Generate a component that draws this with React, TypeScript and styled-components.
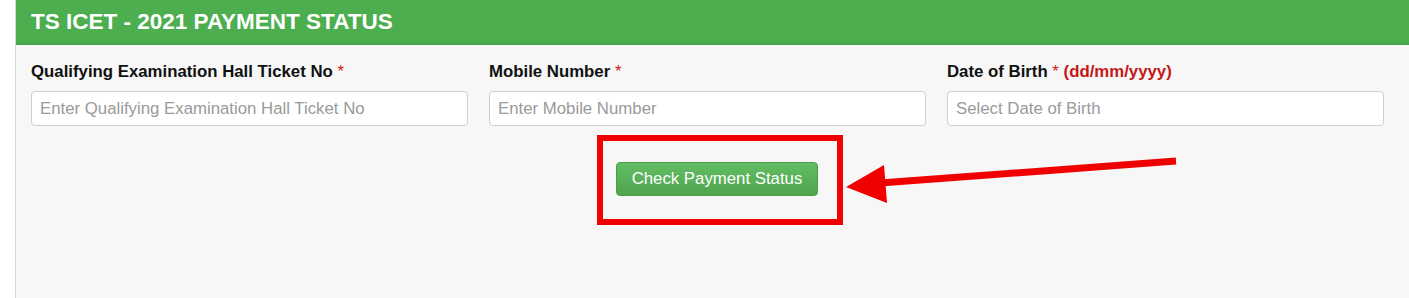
import styled, {createGlobalStyle} from "styled-components";

const GlobalStyle = createGlobalStyle`
    html, body {
        margin: 0;
        padding: 0;
        background: #ffffff;
        font-family: "Liberation Sans", Arial, sans-serif;
        overflow: hidden;
    }
`

const Page = styled.div`
    position: relative;
    width: 1409px;
    height: 298px;
    overflow: hidden;
`

const Panel = styled.section`
    margin-left: 15px;
    width: 1420px;
    min-height: 298px;
    background: #f6f7f6;
    border-left: 1px solid #d9d9d9;
`

const PanelHeader = styled.h2`
    margin: 0;
    height: 43px;
    padding: 0 15px;
    display: flex;
    align-items: center;
    background: #4cae4f;
    border-bottom: 2px solid #47a34a;
    color: #ffffff;
    font-size: 22.5px;
    font-weight: bold;
`

const FieldGrid = styled.div`
    display: grid;
    grid-template-columns: repeat(3, 437px);
    column-gap: 21px;
    padding: 16px 15px 0;
`

const Field = styled.label`
    display: flex;
    flex-direction: column;
`

const LabelText = styled.span`
    font-size: 16.8px;
    font-weight: bold;
    color: #111;
    line-height: 22px;
    margin-bottom: 8px;
`

const Required = styled.span`
    color: #d21a1a;
    font-weight: normal;
`

const Hint = styled.span`
    color: #c41818;
    font-weight: bold;
`

const TextInput = styled.input`
    box-sizing: border-box;
    height: 35px;
    width: 100%;
    padding: 0 8px;
    border: 1px solid #cfcfcf;
    border-radius: 4px;
    background: #fff;
    font-family: "Liberation Sans", Arial, sans-serif;
    font-size: 16.8px;
    color: #333;
    outline: none;

    &::placeholder {
        color: #9a9a9a;
    }
`

const ButtonRow = styled.div`
    display: flex;
    justify-content: center;
    padding-right: 18px;
    margin-top: 36px;
`

const SubmitButton = styled.button`
    width: 202px;
    height: 34px;
    padding: 0;
    border: 1px solid #4a9f4a;
    border-radius: 4px;
    background: linear-gradient(#62be62, #4fa44f);
    color: #fff;
    font-family: "Liberation Sans", Arial, sans-serif;
    font-size: 16.8px;
    cursor: pointer;
`

const Annotation = styled.svg`
    position: absolute;
    top: 0;
    left: 0;
    pointer-events: none;
`

export default function App() {
    return <Page>
        <GlobalStyle/>
        <Panel>
            <PanelHeader>TS ICET - 2021 PAYMENT STATUS</PanelHeader>
            <FieldGrid>
                <Field>
                    <LabelText>Qualifying Examination Hall Ticket No <Required>*</Required></LabelText>
                    <TextInput placeholder="Enter Qualifying Examination Hall Ticket No"/>
                </Field>
                <Field>
                    <LabelText>Mobile Number <Required>*</Required></LabelText>
                    <TextInput placeholder="Enter Mobile Number"/>
                </Field>
                <Field>
                    <LabelText>Date of Birth <Required>*</Required> <Hint>(dd/mm/yyyy)</Hint></LabelText>
                    <TextInput placeholder="Select Date of Birth"/>
                </Field>
            </FieldGrid>
            <ButtonRow>
                <SubmitButton type="button">Check Payment Status</SubmitButton>
            </ButtonRow>
        </Panel>
        <Annotation width="1409" height="298" viewBox="0 0 1409 298">
            <rect x="600" y="138" width="240" height="84" fill="none" stroke="#f00000" strokeWidth="6"/>
            <line x1="1176" y1="161" x2="880" y2="183" stroke="#f00000" strokeWidth="7"/>
            <polygon points="846,187 884,165 887,203" fill="#f00000"/>
        </Annotation>
    </Page>
}
